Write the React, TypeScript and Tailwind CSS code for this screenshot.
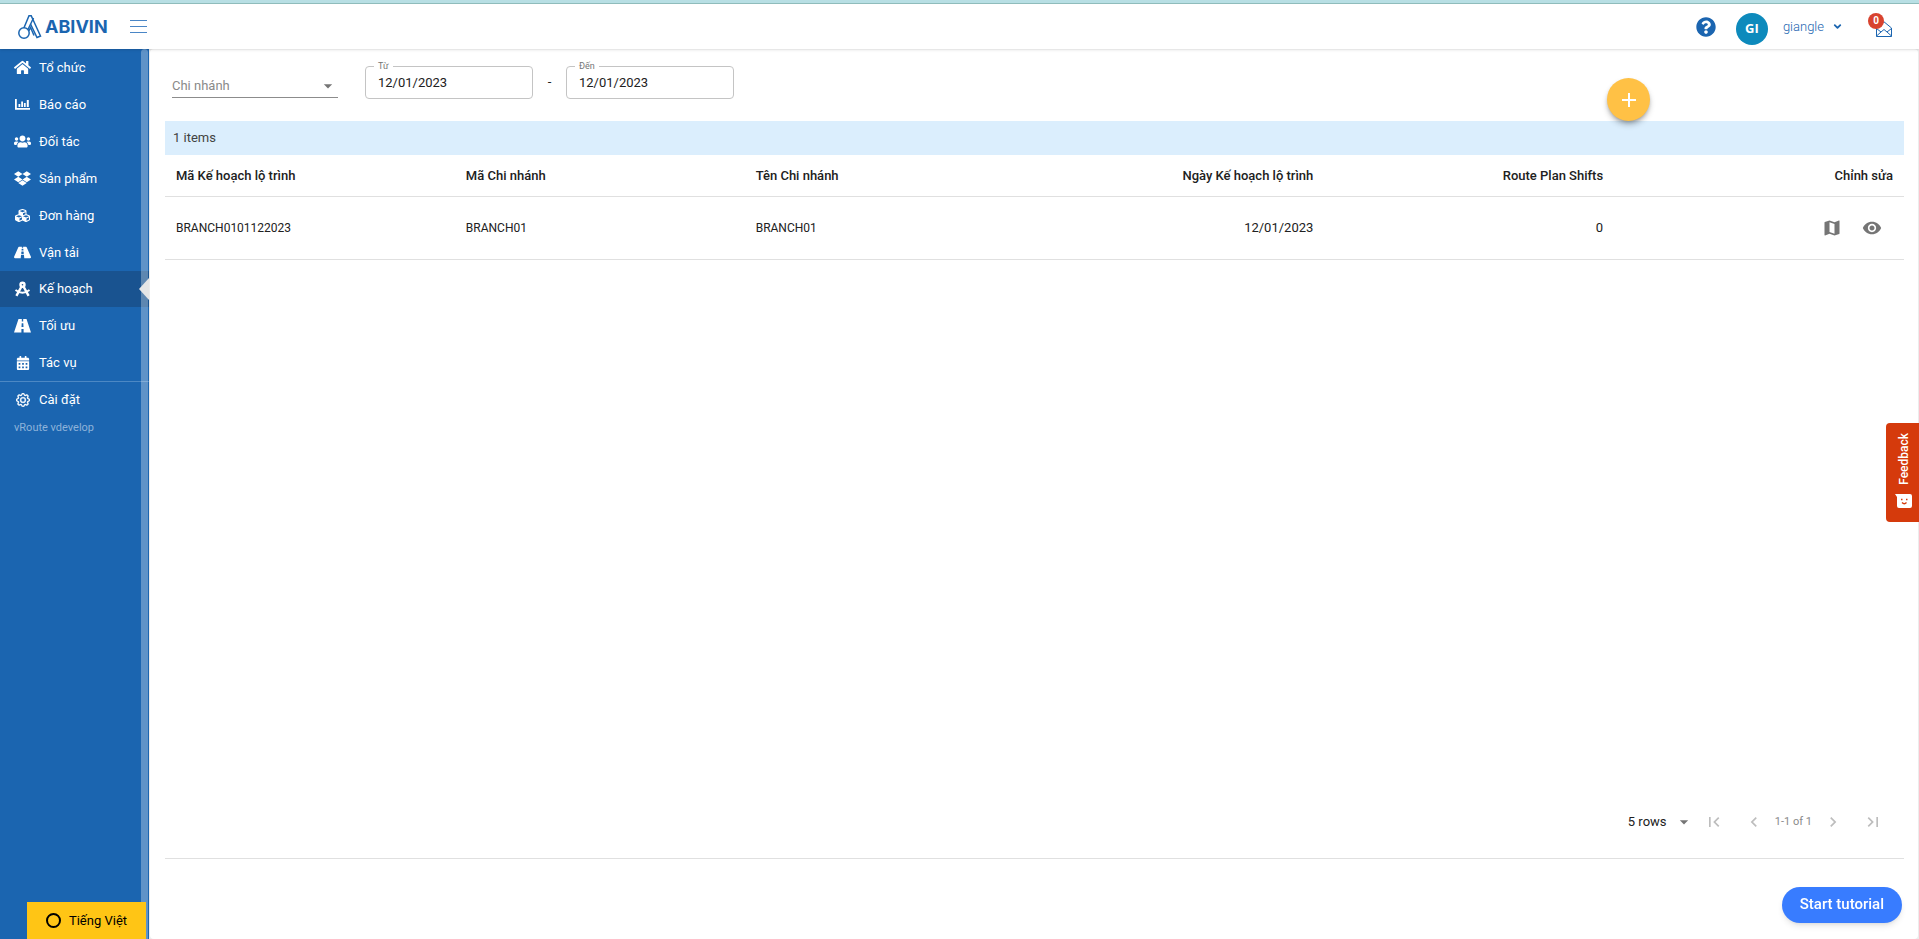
import React from 'react'
import {
  FaHome,
  FaUsers,
  FaDropbox,
  FaCubes,
  FaRoad,
  FaCalendarAlt,
  FaQuestionCircle,
} from 'react-icons/fa'
import { BsGear } from 'react-icons/bs'
import { FiChevronDown } from 'react-icons/fi'
import {
  MdAdd,
  MdArrowDropDown,
  MdChevronLeft,
  MdChevronRight,
  MdFirstPage,
  MdLastPage,
  MdMap,
  MdVisibility,
} from 'react-icons/md'

type IconProps = { className?: string }

const ChartIcon = ({ className }: IconProps) => (
  <svg className={className} viewBox="0 0 17 17" fill="currentColor">
    <path d="M1 3 H2.8 V12 H16 V13.8 H1 Z" />
    <path d="M4.5 8 H6.3 V11 H4.5 Z M7.2 5.5 H9 V11 H7.2 Z M9.9 7 H11.7 V11 H9.9 Z M12.8 4 H14.8 V11 H12.8 Z" />
  </svg>
)

const CompassIcon = ({ className }: IconProps) => (
  <svg className={className} viewBox="0 0 17 17" fill="none" stroke="currentColor" strokeWidth="2.4">
    <circle cx="8.5" cy="3.8" r="2" />
    <path d="M7.5 5.5 L2.4 14.8 M9.5 5.5 L14.6 14.8" />
    <path d="M1.5 9 Q8.5 14.5 15.5 9" strokeWidth="1.8" />
  </svg>
)

const NarrowRoadIcon = ({ className }: IconProps) => (
  <svg className={className} viewBox="0 0 17 17" fill="currentColor">
    <path d="M4.5 2 H7.8 V4.5 H9.2 V2 H12.5 L17 15.5 H9.6 V12 H7.4 V15.5 H0 Z M7.7 6.2 L7.5 10 H9.5 L9.3 6.2 Z" fillRule="evenodd" />
  </svg>
)

const menu = [
  { label: 'Tổ chức', icon: FaHome },
  { label: 'Báo cáo', icon: ChartIcon },
  { label: 'Đối tác', icon: FaUsers },
  { label: 'Sản phẩm', icon: FaDropbox },
  { label: 'Đơn hàng', icon: FaCubes },
  { label: 'Vận tải', icon: FaRoad },
  { label: 'Kế hoạch', icon: CompassIcon, active: true },
  { label: 'Tối ưu', icon: NarrowRoadIcon },
  { label: 'Tác vụ', icon: FaCalendarAlt },
]

const Logo = () => (
  <a href="#" className="flex items-center gap-[3px] text-[#1b65b0]" aria-label="Abivin">
    <svg width="24" height="26" viewBox="0 0 24 26" fill="none" stroke="currentColor" strokeWidth="1.5">
      <circle cx="6" cy="19" r="5.2" />
      <path d="M6 13.8 L11 1.8 L13.2 1.8 L22.5 22 L19 23.5 L12.5 10" />
      <path d="M10 15.5 L15.5 4" />
      <path d="M10.8 17 L12.6 13.5 L16 21.5" />
    </svg>
    <span className="font-['Inter',sans-serif] text-lg leading-6 font-bold">ABIVIN</span>
  </a>
)

const Header = () => (
  <header className="relative z-10 border-t-[3px] border-[#b8dfe4] bg-white shadow-sm">
    <div className="flex h-[46px] items-center border-t border-[#8fbcbb] pr-[27px] pl-[18px]">
      <Logo />
      <button aria-label="Menu" className="ml-[22px] flex w-[17px] flex-col gap-[5px] py-2">
        <span className="h-px w-full bg-[#4a86c6]" />
        <span className="h-px w-full bg-[#4a86c6]" />
        <span className="h-px w-full bg-[#4a86c6]" />
      </button>
      <div className="ml-auto flex items-center">
        <button aria-label="Help">
          <FaQuestionCircle className="size-5 text-[#1b65b0]" />
        </button>
        <span className="mt-1 ml-5 flex size-8 items-center justify-center rounded-full bg-[#0d8abc] font-['Open_Sans',sans-serif] text-[13px] font-bold text-white">
          GI
        </span>
        <button className="ml-[15px] flex items-center gap-2 text-[13px] font-light text-[#1b65b0]">
          giangle
          <FiChevronDown className="size-[11px]" strokeWidth={4} />
        </button>
        <button aria-label="Messages" className="relative mt-1 ml-[33px]">
          <svg width="16" height="16" viewBox="0 0 16 16" fill="none" stroke="#1b65b0">
            <path d="M.5 7 L8 .8 L15.5 7 V15.5 H.5 Z" />
            <path d="M.5 7.5 L5 11 L.5 15 M15.5 7.5 L11 11 L15.5 15 M5 11 L8 8.5 L11 11" />
          </svg>
          <span className="absolute -top-2 -left-2 flex size-4 items-center justify-center rounded-full bg-[#d8432f] text-[10px] font-bold text-white">
            0
          </span>
        </button>
      </div>
    </div>
  </header>
)

const Sidebar = () => (
  <aside className="relative flex w-[149px] shrink-0 flex-col bg-[#1b65b0] text-[13px] text-white">
    <nav>
      {menu.map(({ label, icon: Icon, active }) => (
        <a
          key={label}
          href="#"
          className={
            active
              ? 'relative flex h-9 items-center gap-2 bg-[#195390] pl-[14px]'
              : 'flex h-[37px] items-center gap-2 pl-[14px]'
          }
        >
          <span className="flex w-[17px] justify-center">
            <Icon
              className={
                label === 'Tác vụ' ? 'size-[14px]' : label === 'Đơn hàng' ? 'size-[15px]' : 'size-[17px]'
              }
            />
          </span>
          {label}
          {active && (
            <svg className="absolute top-[7px] right-0 z-10" width="10" height="22" viewBox="0 0 10 22">
              <path d="M10 0 V22 L0 11 Z" fill="#e6e6e6" />
            </svg>
          )}
        </a>
      ))}
      <a href="#" className="flex h-[37px] items-center gap-2 border-t border-[#4c88c4] pl-[14px]">
        <span className="flex w-[17px] justify-center">
          <BsGear className="size-[14px]" strokeWidth={0.6} />
        </span>
        Cài đặt
      </a>
    </nav>
    <p className="pt-px pl-[14px] text-[11px] leading-[18px] text-[#8db3da]">vRoute vdevelop</p>
    {/* scrollbar thumb */}
    <div className="absolute inset-y-0 right-px w-[7px] rounded-t bg-white/30" />
    <button className="relative mt-auto mr-[3px] ml-[27px] flex h-[37px] items-center justify-center gap-2 bg-[#ffc515] text-[13px] text-black">
      <span className="size-[15px] rounded-full border-2 border-black" />
      Tiếng Việt
    </button>
  </aside>
)

const DateField = ({ id, label }: { id: string; label: string }) => (
  <fieldset className="h-[37px] w-[168px] rounded border border-[#c4c4c4] pr-2 pl-1">
    <legend className="ml-1 px-1 text-[9px] leading-[9px] text-[#757575]">
      <label htmlFor={id}>{label}</label>
    </legend>
    <input id={id} defaultValue="12/01/2023" className="block h-[22px] w-full px-2 text-[13px] outline-none" />
  </fieldset>
)

const Filters = () => (
  <div className="flex h-[72px] items-start pt-[13px] pl-[7px]">
    <div className="mt-3 grid w-[166px] items-center border-b border-[#8c8c8c]">
      <select
        aria-label="Chi nhánh"
        className="col-start-1 row-start-1 h-[23px] appearance-none bg-transparent text-[13px] text-[#8a8a8a]"
      >
        <option>Chi nhánh</option>
      </select>
      <MdArrowDropDown className="pointer-events-none col-start-1 row-start-1 size-5 justify-self-end text-[#757575]" />
    </div>
    <div className="ml-[27px] flex items-center">
      <DateField id="from" label="Từ" />
      <span className="w-[33px] pt-[3px] text-center text-[13px]">-</span>
      <DateField id="to" label="Đến" />
    </div>
  </div>
)

const PlanTable = () => (
  <table className="w-full table-fixed text-left text-[13px]">
    <thead>
      <tr className="h-[41px] border-b border-[#e0e0e0] *:px-[11px] *:font-medium">
        <th>Mã Kế hoạch lộ trình</th>
        <th>Mã Chi nhánh</th>
        <th>Tên Chi nhánh</th>
        <th className="text-right">Ngày Kế hoạch lộ trình</th>
        <th className="text-right">Route Plan Shifts</th>
        <th className="text-right">Chỉnh sửa</th>
      </tr>
    </thead>
    <tbody>
      <tr className="h-[63px] border-b border-[#e0e0e0] *:px-[11px]">
        <td className="text-xs">BRANCH0101122023</td>
        <td className="text-xs">BRANCH01</td>
        <td className="text-xs">BRANCH01</td>
        <td className="text-right">12/01/2023</td>
        <td className="text-right">0</td>
        <td>
          <div className="flex justify-end gap-5 pr-[11px] text-[#757575]">
            <button aria-label="Map">
              <MdMap className="size-5" />
            </button>
            <button aria-label="View">
              <MdVisibility className="size-5" />
            </button>
          </div>
        </td>
      </tr>
    </tbody>
  </table>
)

const Pagination = () => (
  <div className="mt-auto flex h-[74px] items-center justify-end border-b border-[#e0e0e0] pr-[21px] text-[#bdbdbd]">
    <div className="mr-[10px] grid w-[66px] items-center text-[13px] text-[#212121]">
      <select aria-label="Rows per page" className="col-start-1 row-start-1 appearance-none bg-transparent">
        <option>5 rows</option>
      </select>
      <MdArrowDropDown className="pointer-events-none col-start-1 row-start-1 size-5 justify-self-end text-[#757575]" />
    </div>
    <button aria-label="First page">
      <MdFirstPage className="size-5" />
    </button>
    <button aria-label="Previous page" className="ml-5">
      <MdChevronLeft className="size-5" />
    </button>
    <span className="mx-[11px] pt-0.5 text-[11px] text-[#8a8a8a]">1-1 of 1</span>
    <button aria-label="Next page">
      <MdChevronRight className="size-5" />
    </button>
    <button aria-label="Last page" className="ml-5">
      <MdLastPage className="size-5" />
    </button>
  </div>
)

const App = () => {
  return (
    <div className="flex min-h-screen flex-col bg-[#ececec] font-['Roboto',sans-serif] text-[#212121]">
      <Header />
      <div className="flex flex-1">
        <Sidebar />
        <main className="relative mr-px ml-px flex flex-1 flex-col rounded bg-white pr-[14px] pb-20 pl-[15px]">
          <Filters />
          <p className="flex h-[34px] items-center bg-[#dbeefd] pl-2 text-[13px] text-[#424242]">1 items</p>
          <PlanTable />
          <Pagination />
          <button
            aria-label="Add"
            className="absolute top-[29px] right-[268px] flex size-[43px] items-center justify-center rounded-full bg-[#ffc145] text-white shadow-md shadow-black/30"
          >
            <MdAdd className="size-6" />
          </button>
        </main>
      </div>
      <button className="fixed right-0 bottom-[417px] flex h-[99px] w-[33px] flex-col items-center justify-center gap-[9px] rounded-l bg-[#d53a0c] pb-1 pl-0.5 text-white">
        <span className="rotate-180 text-xs leading-4 font-medium [writing-mode:vertical-rl]">Feedback</span>
        <svg width="17" height="14" viewBox="0 0 17 14">
          <path d="M0 0 H15 Q17 0 17 2 V12 Q17 14 15 14 H4 Q2 14 2 12 V3 Z" fill="#fff" />
          <path d="M6 5.5 h1.5 M11 5.5 h1.5 M7 8.5 q2.3 2.5 4.5 0" stroke="#d53a0c" strokeWidth="1.3" fill="none" />
        </svg>
      </button>
      <button className="fixed right-[17px] bottom-4 h-9 rounded-full bg-[#387cff] px-[18px] pb-0.5 text-[15px] font-medium text-white shadow-md">
        Start tutorial
      </button>
    </div>
  )
}

export default App
